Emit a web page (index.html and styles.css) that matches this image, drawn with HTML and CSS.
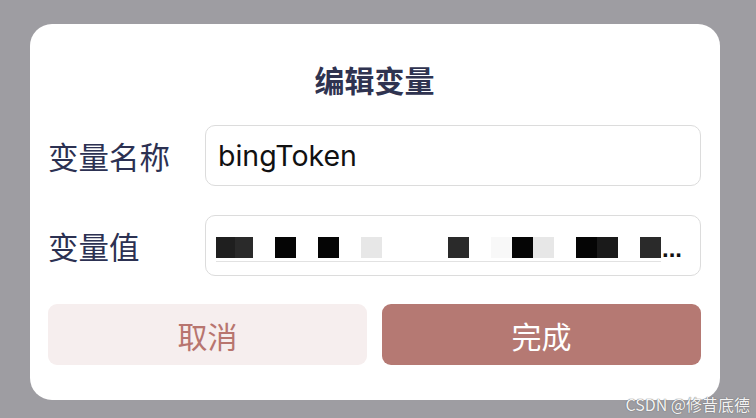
FILE: index.html
```html
<!DOCTYPE html>
<html lang="zh-CN">
<head>
    <meta charset="UTF-8">
    <meta name="viewport" content="width=device-width, initial-scale=1.0">
    <title>编辑变量</title>
    <link rel="stylesheet" href="styles.css">
</head>
<body>

    <div class="dialog">
        <h1 class="dialog-title">编辑变量</h1>

        <form class="var-form">
            <!-- 变量名称 -->
            <label class="var-label" for="var-name">变量名称</label>
            <div class="field">
                <span class="field-text" id="var-name">bingToken</span>
            </div>

            <!-- 变量值（已打码） -->
            <label class="var-label">变量值</label>
            <div class="field">
                <span class="mosaic">
                    <i class="px narrow c2"></i><i class="px narrow c3"></i>
                    <i class="gap"></i>
                    <i class="px c0"></i>
                    <i class="gap"></i>
                    <i class="px c0"></i>
                    <i class="gap"></i>
                    <i class="px c8"></i>
                    <i class="gap wide"></i>
                    <i class="px c3"></i>
                    <i class="gap"></i>
                    <i class="px c9"></i><i class="px c0"></i><i class="px c8"></i>
                    <i class="gap"></i>
                    <i class="px c0"></i><i class="px c1"></i>
                    <i class="gap"></i>
                    <i class="px c3"></i>
                </span>
                <span class="more">...</span>
            </div>
        </form>

        <div class="actions">
            <button class="btn btn-cancel" type="button">取消</button>
            <button class="btn btn-done" type="button">完成</button>
        </div>
    </div>

    <div class="watermark">CSDN @修昔底德</div>

</body>
</html>
```

FILE: styles.css
```css
body {
    margin: 0;
    height: 418px;
    background-color: #9e9da2;
    font-family: "Noto Sans CJK SC", "Noto Sans", sans-serif;
    overflow: hidden;
}
.dialog {
    width: 690px;
    margin: 24px 0 0 30px;
    padding: 35px 19px 35px 18px;
    box-sizing: border-box;
    background-color: #ffffff;
    border-radius: 22px;
}
.dialog-title {
    margin: 0 0 26px;
    height: 40px;
    line-height: 40px;
    text-align: center;
    font-size: 30px;
    font-weight: bold;
    color: #2f3350;
}
.var-form {
    display: grid;
    grid-template-columns: 157px 1fr;
    row-gap: 29px;
    align-items: center;
}
.var-label {
    font-size: 30.5px;
    color: #2c3152;
    line-height: 40px;
}
.field {
    height: 61px;
    box-sizing: border-box;
    border: 1px solid #dcdcdc;
    border-radius: 10px;
    padding: 0 14px 0 10px;
    display: flex;
    align-items: center;
}
.field-text {
    font-family: Inter, "Noto Sans", sans-serif;
    font-size: 28.5px;
    color: #111111;
    padding-left: 2px;
}
.mosaic {
    display: flex;
    padding-bottom: 3px;
    border-bottom: 1px solid #e2e2e2;
    margin-top: 7px;
}
.px {
    display: block;
    width: 21px;
    height: 21px;
}
.px.narrow {
    width: 18.5px;
}
.gap {
    display: block;
    width: 22px;
}
.gap.wide {
    width: 66px;
}
.c0 { background-color: #050505; }
.c1 { background-color: #1a1a1a; }
.c2 { background-color: #1f1f1f; }
.c3 { background-color: #2a2a2a; }
.c8 { background-color: #e7e7e7; }
.c9 { background-color: #f8f8f8; }
.more {
    font-family: "Liberation Sans", sans-serif;
    font-size: 24px;
    font-weight: bold;
    color: #111111;
    align-self: center;
    margin-top: 6px;
    margin-left: 1px;
    letter-spacing: 0;
}
.actions {
    display: grid;
    grid-template-columns: 1fr 1fr;
    column-gap: 15px;
    margin-top: 28px;
}
.btn {
    height: 61px;
    border: none;
    border-radius: 9px;
    font-family: "Noto Sans CJK SC", sans-serif;
    font-size: 30px;
    cursor: pointer;
}
.btn-cancel {
    background-color: #f6eeee;
    color: #b8756f;
}
.btn-done {
    background-color: #b57973;
    color: #ffffff;
}
.watermark {
    position: absolute;
    right: 6px;
    bottom: 2px;
    font-size: 16px;
    color: #f4f4f4;
    text-shadow: 0 0 1px #6d6d70, 0 0 1px #6d6d70;
}
```
